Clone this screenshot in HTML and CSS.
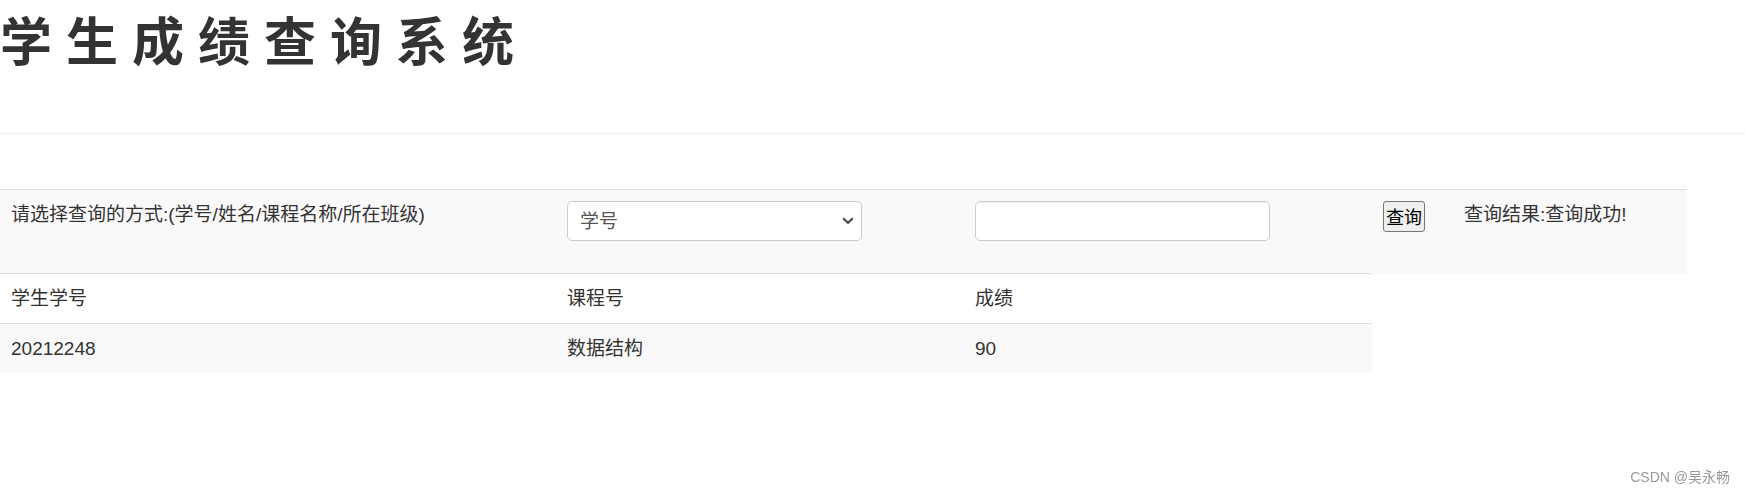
FILE: index.html
```html
<!DOCTYPE html>
<html lang="zh-CN">
<head>
  <meta charset="UTF-8">
  <title>学生成绩查询系统</title>
  <link rel="stylesheet" href="styles.css">
</head>
<body>
  <div class="header">
    <h1>学生成绩查询系统</h1>
  </div>
  <hr class="divider">

  <table class="table table-striped">
    <colgroup>
      <col class="col-id">
      <col class="col-course">
      <col class="col-score">
      <col class="col-btn">
      <col class="col-result">
    </colgroup>
    <tbody>
      <tr>
        <td>请选择查询的方式:(学号/姓名/课程名称/所在班级)</td>
        <td>
          <div class="form-group select-wrap">
            <select class="form-control">
              <option>学号</option>
              <option>姓名</option>
              <option>课程名称</option>
              <option>所在班级</option>
            </select>
            <svg class="select-arrow" width="12" height="8" viewBox="0 0 12 8">
              <path d="M1.2 1.2 L6 5.8 L10.8 1.2" fill="none" stroke="#444" stroke-width="2"/>
            </svg>
          </div>
        </td>
        <td>
          <div class="form-group">
            <input type="text" class="form-control">
          </div>
        </td>
        <td><button class="query-button">查询</button></td>
        <td>查询结果:查询成功!</td>
      </tr>
      <tr>
        <td>学生学号</td>
        <td>课程号</td>
        <td>成绩</td>
      </tr>
      <tr>
        <td>20212248</td>
        <td>数据结构</td>
        <td>90</td>
      </tr>
    </tbody>
  </table>

  <div class="watermark">CSDN @吴永畅</div>
</body>
</html>
```

FILE: styles.css
```css
* {
  box-sizing: border-box;
}

body {
  margin: 0;
  font-family: "Liberation Sans", "Noto Sans CJK SC", sans-serif;
  font-size: 19px;
  color: #333;
  background: #fff;
}

.header h1 {
  margin: 0;
  font-family: "Noto Sans CJK SC", sans-serif;
  font-size: 52px;
  font-weight: 700;
  line-height: 78px;
  letter-spacing: 14px;
  color: #333;
}

.divider {
  margin: 55px 0 55px;
  border: 0;
  border-top: 1px solid #eee;
}

.table {
  width: 1687px;
  table-layout: fixed;
  border-collapse: collapse;
  border-spacing: 0;
}

.col-id { width: 556px; }
.col-course { width: 408px; }
.col-score { width: 408px; }
.col-btn { width: 81px; }
.col-result { width: 234px; }

.table td {
  padding: 11px;
  line-height: 27px;
  vertical-align: top;
  border-top: 1px solid #ddd;
  white-space: nowrap;
}

.table-striped tr:nth-of-type(odd) td {
  background: #f9f9f9;
}

.form-group {
  margin-bottom: 21px;
}

.select-wrap {
  position: relative;
  width: 295px;
}

.form-control {
  display: block;
  width: 295px;
  height: 40px;
  padding: 0 12px;
  font-family: "Liberation Sans", "Noto Sans CJK SC", sans-serif;
  font-size: 19px;
  color: #555;
  background: #fff;
  border: 1px solid #ccc;
  border-radius: 5px;
  box-shadow: inset 0 1px 1px rgba(0, 0, 0, 0.075);
  outline: none;
}

select.form-control {
  -webkit-appearance: none;
  appearance: none;
  box-shadow: none;
}

.select-arrow {
  position: absolute;
  right: 8px;
  top: 16px;
  pointer-events: none;
}

.query-button {
  display: block;
  padding: 1px 2px;
  font-family: "Noto Sans CJK SC", sans-serif;
  font-size: 18px;
  line-height: 27px;
  color: #000;
  background: #efefef;
  border: 1px solid #767676;
  border-radius: 3px;
}

.watermark {
  position: fixed;
  right: 15px;
  bottom: 7px;
  font-size: 14px;
  color: #999;
}
```
